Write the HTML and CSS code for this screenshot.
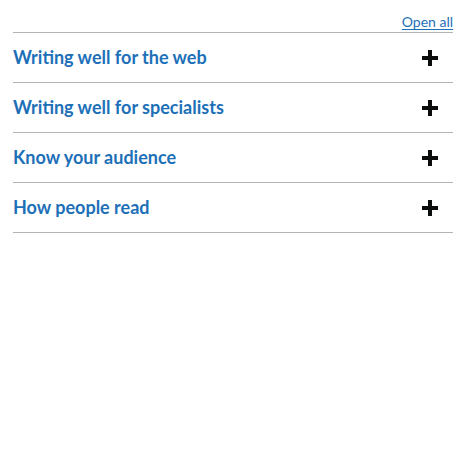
FILE: index.html
```
<!DOCTYPE html>
<html lang="en">
<head>
<meta charset="utf-8">
<link rel="stylesheet" href="styles.css">
</head>
<body>
<div class="accordion">
  <div class="controls"><a class="open-all" href="#">Open all</a></div>
  <div class="section"><span class="heading">Writing well for the web</span><span class="icon"></span></div>
  <div class="section"><span class="heading">Writing well for specialists</span><span class="icon"></span></div>
  <div class="section"><span class="heading">Know your audience</span><span class="icon"></span></div>
  <div class="section"><span class="heading">How people read</span><span class="icon"></span></div>
</div>
</body>
</html>
```
FILE: styles.css
```
html, body { margin: 0; padding: 0; background: #fff; }
body { font-family: "Lato", "Liberation Sans", sans-serif; }
.accordion { padding: 0 11px 0 13px; }
.controls { display: flex; justify-content: flex-end; height: 32px; align-items: flex-end; }
.open-all { font-size: 14px; line-height: 18px; color: #1d70b8; text-decoration: underline; text-underline-offset: 2px; margin-bottom: 1px; }
.section { display: flex; align-items: center; justify-content: space-between; height: 49px; border-top: 1px solid #b1b4b6; }
.section:last-child { border-bottom: 1px solid #b1b4b6; }
.heading { font-size: 18px; line-height: 22px; font-weight: 700; color: #1d70b8; margin-bottom: 2px; }
.icon { position: relative; width: 16px; height: 16px; margin-right: 15px; }
.icon::before, .icon::after { content: ""; position: absolute; background: #0b0c0c; }
.icon::before { left: 0; top: 6px; width: 16px; height: 4px; }
.icon::after { left: 6px; top: 0; width: 4px; height: 16px; }
```
